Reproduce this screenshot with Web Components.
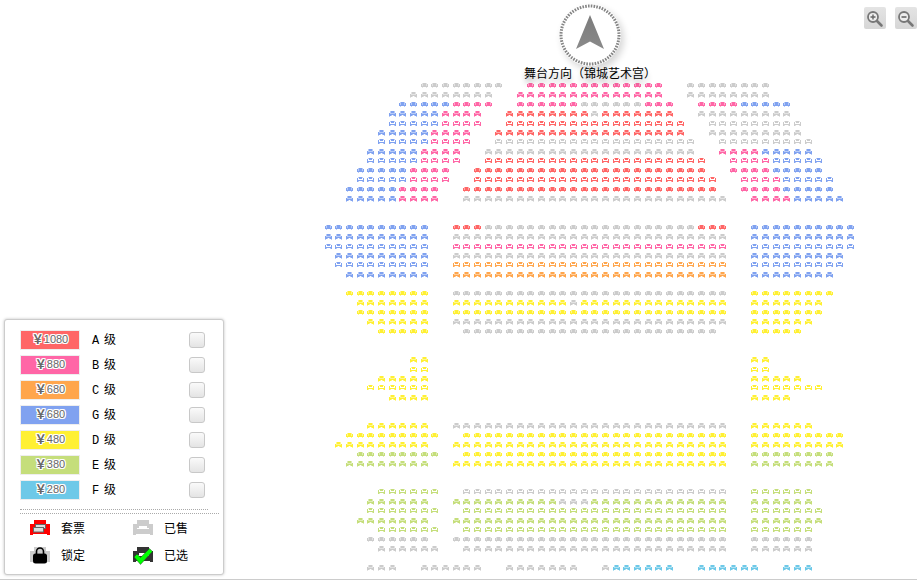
<!DOCTYPE html>
<html lang="zh">
<head>
<meta charset="utf-8">
<title>选座</title>
<style>
  html, body { margin: 0; padding: 0; background: #fff; overflow: hidden; }
</style>
</head>
<body>
<theater-page>
  <seat-map slot="map"></seat-map>
  <stage-compass slot="compass">舞台方向（锦城艺术宫）</stage-compass>
  <zoom-controls slot="zoom"></zoom-controls>
  <price-legend slot="legend">
    <price-row color="#ff6666" price="1080">A 级</price-row>
    <price-row color="#ff66a6" price="880">B 级</price-row>
    <price-row color="#ffa64d" price="680">C 级</price-row>
    <price-row color="#80a2f0" price="680">G 级</price-row>
    <price-row color="#fff033" price="480">D 级</price-row>
    <price-row color="#c5de7b" price="380">E 级</price-row>
    <price-row color="#6ec9e8" price="280">F 级</price-row>
    <legend-item slot="key" kind="package">套票</legend-item>
    <legend-item slot="key" kind="sold">已售</legend-item>
    <legend-item slot="key" kind="locked">锁定</legend-item>
    <legend-item slot="key" kind="picked">已选</legend-item>
  </price-legend>
</theater-page>

<script>
const FONT = `"Liberation Sans", "Noto Sans CJK SC", sans-serif`

class TheaterPage extends HTMLElement {
  constructor () {
    super()
    this.attachShadow({ mode: 'open' })
  }

  connectedCallback () {
    this.shadowRoot.innerHTML = /*html*/`
      <style>
        :host { display: block; position: relative; width: 917px; height: 583px; overflow: hidden; font-family: ${FONT}; }
        .canvas { height: 579px; border-bottom: 1px solid #ccc; }
        ::slotted([slot=compass]) { position: absolute; left: 500px; top: 0; }
        ::slotted([slot=zoom]) { position: absolute; right: 0; top: 7px; }
        ::slotted([slot=legend]) { position: absolute; left: 4px; top: 319px; }
      </style>
      <div class="canvas"><slot name="map"></slot></div>
      <slot name="compass"></slot>
      <slot name="zoom"></slot>
      <slot name="legend"></slot>
    `
  }
}

const SEAT_COLORS = {
  x: '#cccccc', r: '#ff6666', p: '#ff66a6', o: '#ffa64d',
  b: '#80a2f0', y: '#fff033', g: '#c5de7b', c: '#6ec9e8'
}

// row number -> runs of seats, letter is the colour and the numbers are grid columns
const SEAT_ROWS = {
  0: 'x9-16 p19-31 x34-41',
  1: 'x8-15 p18-31 x34-41',
  2: 'b7-11 p12-15 p18-23 x24-29 p30-32 p35-38 b39-43',
  3: 'b6-10 p11-14 r17-24 x25 r26-32 x35-43',
  4: 'b6-10 p11-14 r17-33 x36-44',
  5: 'b5-9 p10-13 r16-33 x36-44',
  6: 'b5-9 p10-13 x16-34 x37-45',
  7: 'b4-8 p9-12 x15-34 p37-40 b41-45',
  8: 'b4-8 p9-12 r15-35 p38-41 b42-46',
  9: 'b3-7 p8-11 r14-35 p38-41 b42-46',
  10: 'b3-7 p8-11 r14-36 p39-42 b43-47',
  11: 'b2-6 p7-10 r13-36 p39-42 b43-47',
  12: 'b2-6 p7-10 x13-37 p40-43 b44-48',

  15: 'b0-9 r12-14 x15-34 r35-37 b40-49',
  16: 'b0-9 x12-37 b40-49',
  17: 'b0-9 p12-37 b40-49',
  18: 'b1-9 x12-37 b40-48',
  19: 'b1-9 o12-37 b40-48',
  20: 'b2-9 o12-37 b40-47',

  22: 'y2-9 x12-37 y40-47',
  23: 'y3-9 y12-22 x23 y24-37 y40-46',
  24: 'y3-9 y12-37 y40-46',
  25: 'y4-9 x12-37 y40-45',
  26: 'y5-9 x13-36 y40-44',

  29: 'y8-9 y40-41',
  30: 'y8-9 y40-41',
  31: 'y5-9 y40-44',
  32: 'y4-9 y40-46',
  33: 'y6-9 y40-43',

  36: 'y4-9 x12-37 y40-45',
  37: 'y2-10 y13-37 y40-48',
  38: 'y1-9 y12-37 y40-48',
  39: 'g3-10 y13-37 g40-47',
  40: 'g2-9 y12-37 g40-47',

  43: 'g5-10 x13-37 g40-45',
  44: 'g4-9 g12-21 x22-24 g25-37 g40-45',
  45: 'g4-10 g13-37 g40-46',
  46: 'g3-9 g12-37 g40-46',
  47: 'g5-10 g13-37 g40-45',
  48: 'x4-9 x12-37 x40-45',
  49: 'x5-10 x13-37 x40-45',

  51: 'x4-6 x9-14 x17-23 x26 c27-32 c35-40 c43-45'
}

// little bitmaps of the seat: # is solid, + is half
const SEAT_SHAPES = {
  wide: [
    '.+###+.',
    '.+###+.',
    '#+++++#',
    '#######',
    '##+.+##',
    '+.....+'
  ],
  arch: [
    '.+###+.',
    '#.###.#',
    '#.....#',
    '#######',
    '#+...+#'
  ],
  cup: [
    '.+###+.',
    '#+###+#',
    '#+###+#',
    '#######',
    '.+...+.'
  ]
}

function bitmapPath (rows, mark) {
  let d = ''
  rows.forEach((row, y) => {
    [...row].forEach((ch, x) => {
      if (ch === mark) d += `M${x} ${y}h1v1h-1z`
    })
  })
  return d
}

class SeatMap extends HTMLElement {
  constructor () {
    super()
    this.attachShadow({ mode: 'open' })
  }

  connectedCallback () {
    let symbols = ''
    for (const name in SEAT_SHAPES) {
      symbols += `<g id="${name}">
        <path d="${bitmapPath(SEAT_SHAPES[name], '#')}"/>
        <path d="${bitmapPath(SEAT_SHAPES[name], '+')}" opacity=".55"/>
      </g>`
    }

    let seats = ''
    for (const row in SEAT_ROWS) {
      const cy = 85.7 + 9.46 * row
      const frac = cy - Math.floor(cy)
      const shape = frac < 0.3 || frac >= 0.85 ? 'wide' : frac < 0.55 ? 'arch' : 'cup'
      for (const run of SEAT_ROWS[row].split(' ')) {
        const color = SEAT_COLORS[run[0]]
        const [from, to = from] = run.slice(1).split('-').map(Number)
        for (let k = from; k <= to; k++) {
          const x = Math.round(328.3 + 10.66 * k - 3.5)
          const y = Math.round(cy - 3)
          seats += `<use href="#${shape}" x="${x}" y="${y}" fill="${color}"/>`
        }
      }
    }

    this.shadowRoot.innerHTML = /*html*/`
      <style>
        :host { display: block; width: 917px; height: 579px; }
        svg { display: block; }
      </style>
      <svg width="917" height="579" viewBox="0 0 917 579" shape-rendering="crispEdges">
        <defs>${symbols}</defs>
        ${seats}
      </svg>
    `
  }
}

class StageCompass extends HTMLElement {
  constructor () {
    super()
    this.attachShadow({ mode: 'open' })
  }

  connectedCallback () {
    this.shadowRoot.innerHTML = /*html*/`
      <style>
        :host { display: flex; flex-direction: column; align-items: center; width: 180px; padding-top: 4px; }
        .dial {
          width: 62px; height: 62px; border-radius: 50%;
          box-shadow: 3px 4px 7px rgba(0, 0, 0, .16);
        }
        svg { display: block; }
        .label {
          margin-top: 0; width: 132px; height: 14px; line-height: 14px; font-size: 12px; color: #000; white-space: nowrap;
          font-family: "Noto Sans CJK SC", sans-serif;
          text-shadow: 0 5px 5px rgba(0, 0, 0, .28);
        }
      </style>
      <div class="dial">
        <svg width="62" height="62" viewBox="0 0 62 62">
          <defs>
            <linearGradient id="arrow" x1="0" y1="0" x2="0" y2="1">
              <stop offset="0" stop-color="#7c7c7c"/>
              <stop offset="1" stop-color="#8a8a8a"/>
            </linearGradient>
          </defs>
          <circle cx="31" cy="31" r="29" fill="#fff" stroke="#858585" stroke-width="3" stroke-dasharray="1.6 1.2"/>
          <path d="M31 11 L45 45 L31 37.5 L17 45 Z" fill="url(#arrow)"/>
        </svg>
      </div>
      <div class="label"><slot></slot></div>
    `
  }
}

class ZoomControls extends HTMLElement {
  constructor () {
    super()
    this.attachShadow({ mode: 'open' })
  }

  connectedCallback () {
    const lens = `<circle cx="9" cy="10" r="5" fill="#eee" stroke="#777" stroke-width="1.8"/>
      <path d="M13 14 L17.500 18.500" stroke="#777" stroke-width="2.6" stroke-linecap="round"/>`
    this.shadowRoot.innerHTML = /*html*/`
      <style>
        :host { display: flex; gap: 9px; }
        button {
          width: 22px; height: 22px; padding: 0; border: 0; border-radius: 2px;
          background: linear-gradient(#e4e4e4, #d6d6d6); cursor: pointer;
        }
        svg { display: block; }
      </style>
      <button aria-label="放大">
        <svg width="22" height="22" viewBox="0 0 22 22">${lens}<path d="M6.500 10h5M9 7.500v5" stroke="#666" stroke-width="1.4"/></svg>
      </button>
      <button aria-label="缩小">
        <svg width="22" height="22" viewBox="0 0 22 22">${lens}<path d="M6.500 10h5" stroke="#666" stroke-width="1.6"/></svg>
      </button>
    `
  }
}

class PriceLegend extends HTMLElement {
  constructor () {
    super()
    this.attachShadow({ mode: 'open' })
  }

  connectedCallback () {
    this.shadowRoot.innerHTML = /*html*/`
      <style>
        :host {
          display: block; box-sizing: border-box; width: 220px; height: 256px; padding: 10px 15px 0;
          background: #fff; border: 1px solid #ccc; border-radius: 3px;
          box-shadow: 0 0 3px rgba(0, 0, 0, .25);
        }
        .prices { display: flex; flex-direction: column; gap: 5px; }
        .rule { margin-top: 9px; height: 3px; border-top: 1px dotted #aaa; }
        .keys {
          display: grid; grid-template-columns: 103px 86px; row-gap: 10px;
          padding: 5px 0 0 10px; width: 199px; box-sizing: border-box;
          border-top: 1px dotted #aaa;
        }
      </style>
      <div class="prices"><slot></slot></div>
      <div class="rule"></div>
      <div class="keys"><slot name="key"></slot></div>
    `
  }
}

class PriceRow extends HTMLElement {
  constructor () {
    super()
    this.attachShadow({ mode: 'open' })
  }

  connectedCallback () {
    const color = this.getAttribute('color')
    const price = this.getAttribute('price')
    this.shadowRoot.innerHTML = /*html*/`
      <style>
        :host { display: flex; align-items: center; height: 20px; }
        .swatch {
          box-sizing: border-box; width: 60px; height: 20px; border: 1px solid #eee; padding-bottom: 3px;
          display: flex; justify-content: center; align-items: center;
          color: #666; font-size: 11px; line-height: 14px;
          text-shadow: 1px 0 0 #fff, -1px 0 0 #fff, 0 1px 0 #fff, 0 -1px 0 #fff, 1px 1px 0 #fff, -1px -1px 0 #fff, 1px -1px 0 #fff, -1px 1px 0 #fff;
        }
        .yen { font-size: 12px; font-weight: 700; font-family: "Noto Sans CJK SC", sans-serif; }
        .name {
          width: 97px; margin-left: 12px; padding-bottom: 2px; font-size: 12px; color: #000;
          font-family: "Liberation Mono", "Noto Sans CJK SC", monospace; letter-spacing: -1.2px;
        }
        .box {
          box-sizing: border-box; width: 16px; height: 16px; border: 1px solid #c8c8c8; border-radius: 3px;
          background: linear-gradient(#fafafa, #e4e4e4);
        }
      </style>
      <div class="swatch" style="background:${color}"><span class="yen">￥</span>${price}</div>
      <div class="name"><slot></slot></div>
      <div class="box" role="checkbox" aria-checked="false"></div>
    `
  }
}

const SOFA = (back, arm) => `
  <path d="M4 0h12v8h-2v-2h-8v2h-2z" fill="${back}"/>
  <path d="M0 4h4v5h12v-5h4v11h-3v-1h-14v1h-3z" fill="${arm}"/>`

const KEY_ICONS = {
  package: `${SOFA('#f00', '#f00')}
    <rect x="5.500" y="4.500" width="10" height="4" fill="#ddd" stroke="#666"/>
    <rect x="3.500" y="7.500" width="10" height="4.500" fill="#ddd" stroke="#666"/>`,
  sold: SOFA('#ccc', '#ccc'),
  locked: `${SOFA('#ccc', '#ccc')}
    <path d="M6.500 7v-2.500a3.500 3.500 0 0 1 7 0v2.500" fill="none" stroke="#000" stroke-width="1.600"/>
    <rect x="3" y="6.500" width="14" height="10" rx="2.500" fill="#000"/>`,
  picked: `${SOFA('#333', '#333')}
    <path d="M1 10l3-3 3.500 3.500 9-9 3 3-12 13z" fill="#0f0" stroke="#222" stroke-width=".4"/>`
}

class LegendItem extends HTMLElement {
  constructor () {
    super()
    this.attachShadow({ mode: 'open' })
  }

  connectedCallback () {
    const kind = this.getAttribute('kind')
    this.shadowRoot.innerHTML = /*html*/`
      <style>
        :host {
          display: flex; align-items: center; gap: 11px; height: 17px;
          font-size: 12px; color: #000; font-family: "Noto Sans CJK SC", sans-serif;
        }
        svg { display: block; flex: none; overflow: visible; }
      </style>
      <svg width="20" height="15" viewBox="0 0 20 15">${KEY_ICONS[kind]}</svg>
      <span><slot></slot></span>
    `
  }
}

customElements.define('theater-page', TheaterPage)
customElements.define('seat-map', SeatMap)
customElements.define('stage-compass', StageCompass)
customElements.define('zoom-controls', ZoomControls)
customElements.define('price-legend', PriceLegend)
customElements.define('price-row', PriceRow)
customElements.define('legend-item', LegendItem)
</script>
</body>
</html>
